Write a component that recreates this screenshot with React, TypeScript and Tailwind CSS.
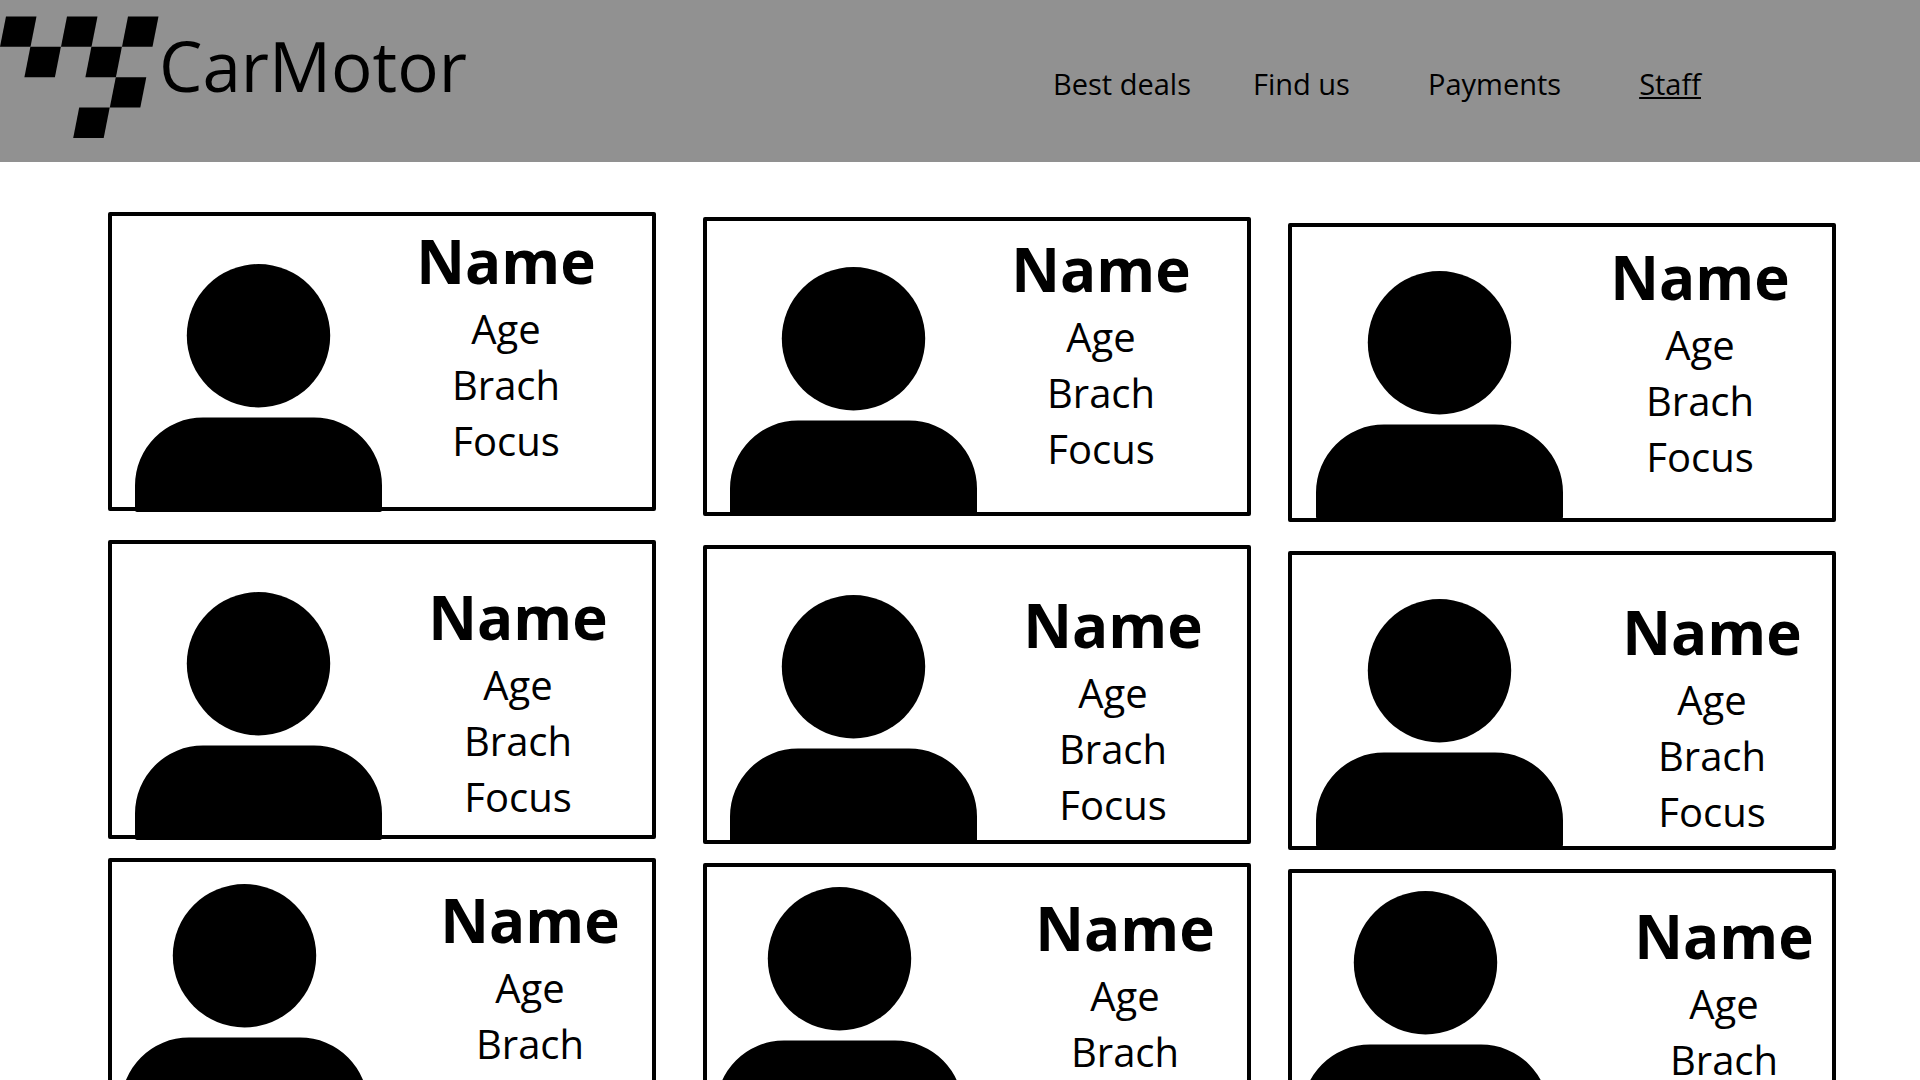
type Card = { avatar: string; text: string };
type Column = { className: string; cards: Card[] };

const columns: Column[] = [
  {
    className: "pt-[50px]",
    cards: [
      { avatar: "ml-[23px] mt-12", text: "mr-14 mt-[5px]" },
      { avatar: "ml-[23px] mt-12", text: "mr-11 mt-[33px]" },
      { avatar: "ml-[9px] mt-[22px]", text: "mr-8 mt-[18px]" },
    ],
  },
  {
    className: "ml-[47px] pt-[55px]",
    cards: [
      { avatar: "ml-[23px] mt-[46px]", text: "mr-14 mt-2" },
      { avatar: "ml-[23px] mt-[46px]", text: "mr-11 mt-[36px]" },
      { avatar: "ml-[9px] mt-5", text: "mr-8 mt-[21px]" },
    ],
  },
  {
    className: "ml-[37px] pt-[61px]",
    cards: [
      { avatar: "ml-6 mt-11", text: "mr-[42px] mt-[10px]" },
      { avatar: "ml-6 mt-11", text: "mr-[30px] mt-[37px]" },
      { avatar: "ml-[10px] mt-[18px]", text: "mr-[18px] mt-[23px]" },
    ],
  },
];

const rowGaps = ["", "mt-[29px]", "mt-[19px]"];

const navLinks = [
  { label: "Best deals", className: "" },
  { label: "Find us", className: "ml-[62px]" },
  { label: "Payments", className: "ml-[78px]" },
  { label: "Staff", className: "ml-[78px] underline" },
];

function Logo() {
  const cells = [
    [0, 0],
    [0, 2],
    [0, 4],
    [1, 1],
    [1, 3],
    [2, 4],
    [3, 3],
  ];
  return (
    <svg width="159" height="122" viewBox="0 0 159 122" aria-hidden="true" className="shrink-0">
      {cells.map(([row, col]) => {
        const x = 6 - 6.1 * row + 30.5 * col;
        const y = 0.4 + 30.4 * row;
        return (
          <polygon
            key={`${row}-${col}`}
            points={`${x},${y} ${x + 30.5},${y} ${x + 24.5},${y + 30.4} ${x - 6},${y + 30.4}`}
          />
        );
      })}
    </svg>
  );
}

function Avatar({ className }: { className: string }) {
  return (
    <svg
      width="247"
      height="248"
      viewBox="0 0 247 248"
      role="img"
      aria-label="Staff portrait"
      className={`shrink-0 ${className}`}
    >
      <circle cx="123.500" cy="71.7" r="71.7" />
      <path d="M0 221.500V246Q0 248 2 248H245Q247 248 247 246V221.500A68 68 0 0 0 179 153.500H68A68 68 0 0 0 0 221.500Z" />
    </svg>
  );
}

function StaffCard({ card, gap }: { card: Card; gap: string }) {
  return (
    <article
      className={`flex h-[299px] items-start justify-between rounded-[2px] border-4 border-black ${gap}`}
    >
      <Avatar className={card.avatar} />
      <div className={`w-[180px] shrink-0 text-center text-[40px] leading-[56px] ${card.text}`}>
        <h2 className="text-[60px] font-bold leading-[80px]">Name</h2>
        <p>Age</p>
        <p>Brach</p>
        <p>Focus</p>
      </div>
    </article>
  );
}

export default function App() {
  return (
    <div className="min-h-screen bg-white font-['Open_Sans',sans-serif] text-black">
      <header className="flex h-[162px] items-start justify-between bg-[#919191] pr-[219px]">
        <a href="#" className="flex items-start pt-4">
          <Logo />
          <span className="text-[69px] leading-[98px]">CarMotor</span>
        </a>
        <nav className="flex pt-16 text-[29px] leading-10">
          {navLinks.map((link) => (
            <a key={link.label} href="#" className={link.className}>
              {link.label}
            </a>
          ))}
        </nav>
      </header>
      <main className="flex items-start pl-[108px] pr-[84px]">
        {columns.map((column, c) => (
          <section key={c} className={`flex-1 ${column.className}`}>
            {column.cards.map((card, r) => (
              <StaffCard key={r} card={card} gap={rowGaps[r]} />
            ))}
          </section>
        ))}
      </main>
    </div>
  );
}
